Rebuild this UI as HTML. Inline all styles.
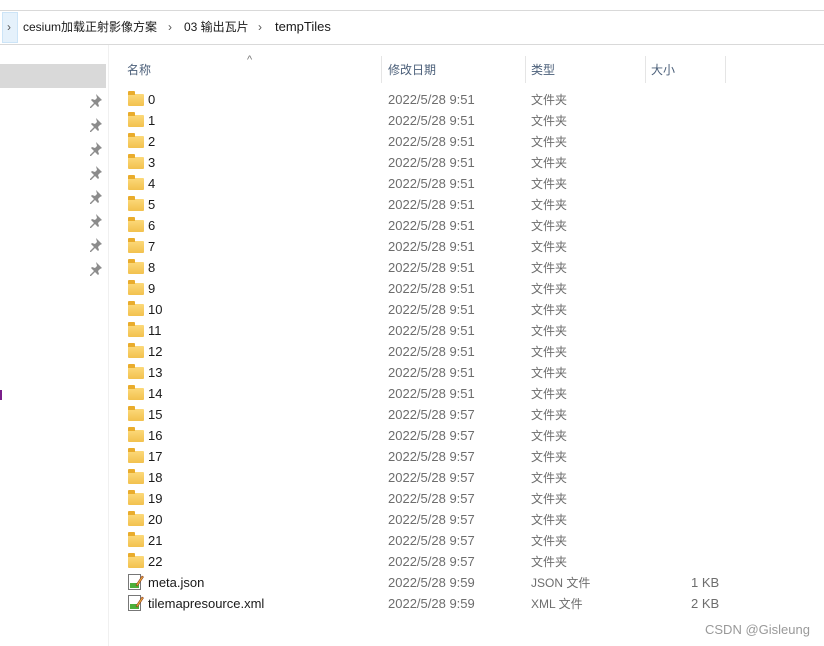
<!DOCTYPE html>
<html><head><meta charset="utf-8"><style>
*{margin:0;padding:0;box-sizing:border-box}
body{width:824px;height:646px;background:#fff;position:relative;overflow:hidden;font-family:"Liberation Sans","Noto Sans CJK SC",sans-serif;font-size:13px;color:#1a1a1a}
.a{position:absolute;white-space:nowrap;line-height:16px}
.g{color:#6d6d6d}
.c{font-size:12px}
.h{color:#4c607a;font-size:12px}
.dv{position:absolute;width:1px;top:56px;height:27px;background:#e5e5e5}
.f{position:absolute;left:128px;width:16px;height:12px;background:linear-gradient(#fcd97a,#f2c14e);border-radius:1px}
.f:before{content:"";position:absolute;left:0;top:-3px;width:7px;height:4px;background:#e9ac2c;border-radius:1px 1px 0 0}
</style></head><body>
<div class="a" style="left:0;top:10px;width:824px;height:1px;background:#d9d9d9"></div>
<div class="a" style="left:0;top:44px;width:824px;height:1px;background:#d9d9d9"></div>
<div class="a" style="left:2px;top:12px;width:16px;height:31px;background:#e5f1fb;border:1px solid #cce4f7"></div>
<div class="a" style="left:7px;top:19px;font-size:12px;color:#555">›</div>
<div class="a" style="left:23px;top:19px;font-size:12px">cesium加载正射影像方案</div>
<div class="a" style="left:168px;top:19px;font-size:12px;color:#555">›</div>
<div class="a" style="left:184px;top:19px;font-size:12px">03 输出瓦片</div>
<div class="a" style="left:258px;top:19px;font-size:12px;color:#555">›</div>
<div class="a" style="left:275px;top:19px;font-size:13px">tempTiles</div>
<div class="a" style="left:0;top:64px;width:106px;height:24px;background:#d9d9d9"></div>
<div class="a" style="left:108px;top:45px;width:1px;height:601px;background:#f0f0f0"></div>
<div class="a" style="left:0;top:390px;width:2px;height:10px;background:#7a1f8a"></div>
<svg class="a" style="left:90px;top:93px" width="14" height="190" viewBox="0 0 14 190">
<g fill="#8c8c8c">
<path id="p" d="M6 1l6 6-2 1-2 2 1 3-1 1-3-3-4 4-1 0 0-1 4-4-3-3 1-1 3 1 2-2z"/>
<use href="#p" y="24"/><use href="#p" y="48"/><use href="#p" y="72"/><use href="#p" y="96"/><use href="#p" y="120"/><use href="#p" y="144"/><use href="#p" y="168"/>
</g></svg>
<div class="a" style="left:247px;top:52px;font-size:11px;color:#777">^</div>
<div class="a h" style="left:127px;top:62px">名称</div>
<div class="a h" style="left:388px;top:62px">修改日期</div>
<div class="a h" style="left:531px;top:62px">类型</div>
<div class="a h" style="left:651px;top:62px">大小</div>
<div class="dv" style="left:381px"></div><div class="dv" style="left:525px"></div><div class="dv" style="left:645px"></div><div class="dv" style="left:725px"></div>

<div class="f" style="top:94px"></div><div class="a" style="left:148px;top:92px">0</div><div class="a g" style="left:388px;top:92px">2022/5/28 9:51</div><div class="a g c" style="left:531px;top:92px">文件夹</div>
<div class="f" style="top:115px"></div><div class="a" style="left:148px;top:113px">1</div><div class="a g" style="left:388px;top:113px">2022/5/28 9:51</div><div class="a g c" style="left:531px;top:113px">文件夹</div>
<div class="f" style="top:136px"></div><div class="a" style="left:148px;top:134px">2</div><div class="a g" style="left:388px;top:134px">2022/5/28 9:51</div><div class="a g c" style="left:531px;top:134px">文件夹</div>
<div class="f" style="top:157px"></div><div class="a" style="left:148px;top:155px">3</div><div class="a g" style="left:388px;top:155px">2022/5/28 9:51</div><div class="a g c" style="left:531px;top:155px">文件夹</div>
<div class="f" style="top:178px"></div><div class="a" style="left:148px;top:176px">4</div><div class="a g" style="left:388px;top:176px">2022/5/28 9:51</div><div class="a g c" style="left:531px;top:176px">文件夹</div>
<div class="f" style="top:199px"></div><div class="a" style="left:148px;top:197px">5</div><div class="a g" style="left:388px;top:197px">2022/5/28 9:51</div><div class="a g c" style="left:531px;top:197px">文件夹</div>
<div class="f" style="top:220px"></div><div class="a" style="left:148px;top:218px">6</div><div class="a g" style="left:388px;top:218px">2022/5/28 9:51</div><div class="a g c" style="left:531px;top:218px">文件夹</div>
<div class="f" style="top:241px"></div><div class="a" style="left:148px;top:239px">7</div><div class="a g" style="left:388px;top:239px">2022/5/28 9:51</div><div class="a g c" style="left:531px;top:239px">文件夹</div>
<div class="f" style="top:262px"></div><div class="a" style="left:148px;top:260px">8</div><div class="a g" style="left:388px;top:260px">2022/5/28 9:51</div><div class="a g c" style="left:531px;top:260px">文件夹</div>
<div class="f" style="top:283px"></div><div class="a" style="left:148px;top:281px">9</div><div class="a g" style="left:388px;top:281px">2022/5/28 9:51</div><div class="a g c" style="left:531px;top:281px">文件夹</div>
<div class="f" style="top:304px"></div><div class="a" style="left:148px;top:302px">10</div><div class="a g" style="left:388px;top:302px">2022/5/28 9:51</div><div class="a g c" style="left:531px;top:302px">文件夹</div>
<div class="f" style="top:325px"></div><div class="a" style="left:148px;top:323px">11</div><div class="a g" style="left:388px;top:323px">2022/5/28 9:51</div><div class="a g c" style="left:531px;top:323px">文件夹</div>
<div class="f" style="top:346px"></div><div class="a" style="left:148px;top:344px">12</div><div class="a g" style="left:388px;top:344px">2022/5/28 9:51</div><div class="a g c" style="left:531px;top:344px">文件夹</div>
<div class="f" style="top:367px"></div><div class="a" style="left:148px;top:365px">13</div><div class="a g" style="left:388px;top:365px">2022/5/28 9:51</div><div class="a g c" style="left:531px;top:365px">文件夹</div>
<div class="f" style="top:388px"></div><div class="a" style="left:148px;top:386px">14</div><div class="a g" style="left:388px;top:386px">2022/5/28 9:51</div><div class="a g c" style="left:531px;top:386px">文件夹</div>
<div class="f" style="top:409px"></div><div class="a" style="left:148px;top:407px">15</div><div class="a g" style="left:388px;top:407px">2022/5/28 9:57</div><div class="a g c" style="left:531px;top:407px">文件夹</div>
<div class="f" style="top:430px"></div><div class="a" style="left:148px;top:428px">16</div><div class="a g" style="left:388px;top:428px">2022/5/28 9:57</div><div class="a g c" style="left:531px;top:428px">文件夹</div>
<div class="f" style="top:451px"></div><div class="a" style="left:148px;top:449px">17</div><div class="a g" style="left:388px;top:449px">2022/5/28 9:57</div><div class="a g c" style="left:531px;top:449px">文件夹</div>
<div class="f" style="top:472px"></div><div class="a" style="left:148px;top:470px">18</div><div class="a g" style="left:388px;top:470px">2022/5/28 9:57</div><div class="a g c" style="left:531px;top:470px">文件夹</div>
<div class="f" style="top:493px"></div><div class="a" style="left:148px;top:491px">19</div><div class="a g" style="left:388px;top:491px">2022/5/28 9:57</div><div class="a g c" style="left:531px;top:491px">文件夹</div>
<div class="f" style="top:514px"></div><div class="a" style="left:148px;top:512px">20</div><div class="a g" style="left:388px;top:512px">2022/5/28 9:57</div><div class="a g c" style="left:531px;top:512px">文件夹</div>
<div class="f" style="top:535px"></div><div class="a" style="left:148px;top:533px">21</div><div class="a g" style="left:388px;top:533px">2022/5/28 9:57</div><div class="a g c" style="left:531px;top:533px">文件夹</div>
<div class="f" style="top:556px"></div><div class="a" style="left:148px;top:554px">22</div><div class="a g" style="left:388px;top:554px">2022/5/28 9:57</div><div class="a g c" style="left:531px;top:554px">文件夹</div>

<svg class="a" style="left:128px;top:574px" width="16" height="16" viewBox="0 0 16 16"><rect x="0.5" y="0.5" width="12" height="15" fill="#fff" stroke="#777"/><rect x="2" y="9" width="9" height="5" fill="#4caf3a"/><path d="M8 11L14 2l1.5 1-6 9z" fill="#e8a33a" stroke="#8a3a1a" stroke-width=".6"/></svg>
<div class="a" style="left:148px;top:575px">meta.json</div><div class="a g" style="left:388px;top:575px">2022/5/28 9:59</div><div class="a g c" style="left:531px;top:575px">JSON 文件</div><div class="a g" style="left:691px;top:575px">1 KB</div>
<svg class="a" style="left:128px;top:595px" width="16" height="16" viewBox="0 0 16 16"><rect x="0.5" y="0.5" width="12" height="15" fill="#fff" stroke="#777"/><rect x="2" y="9" width="9" height="5" fill="#4caf3a"/><path d="M8 11L14 2l1.5 1-6 9z" fill="#e8a33a" stroke="#8a3a1a" stroke-width=".6"/></svg>
<div class="a" style="left:148px;top:596px">tilemapresource.xml</div><div class="a g" style="left:388px;top:596px">2022/5/28 9:59</div><div class="a g c" style="left:531px;top:596px">XML 文件</div><div class="a g" style="left:691px;top:596px">2 KB</div>
<div class="a" style="left:705px;top:622px;font-size:13px;color:#999">CSDN @Gisleung</div>
</body></html>
